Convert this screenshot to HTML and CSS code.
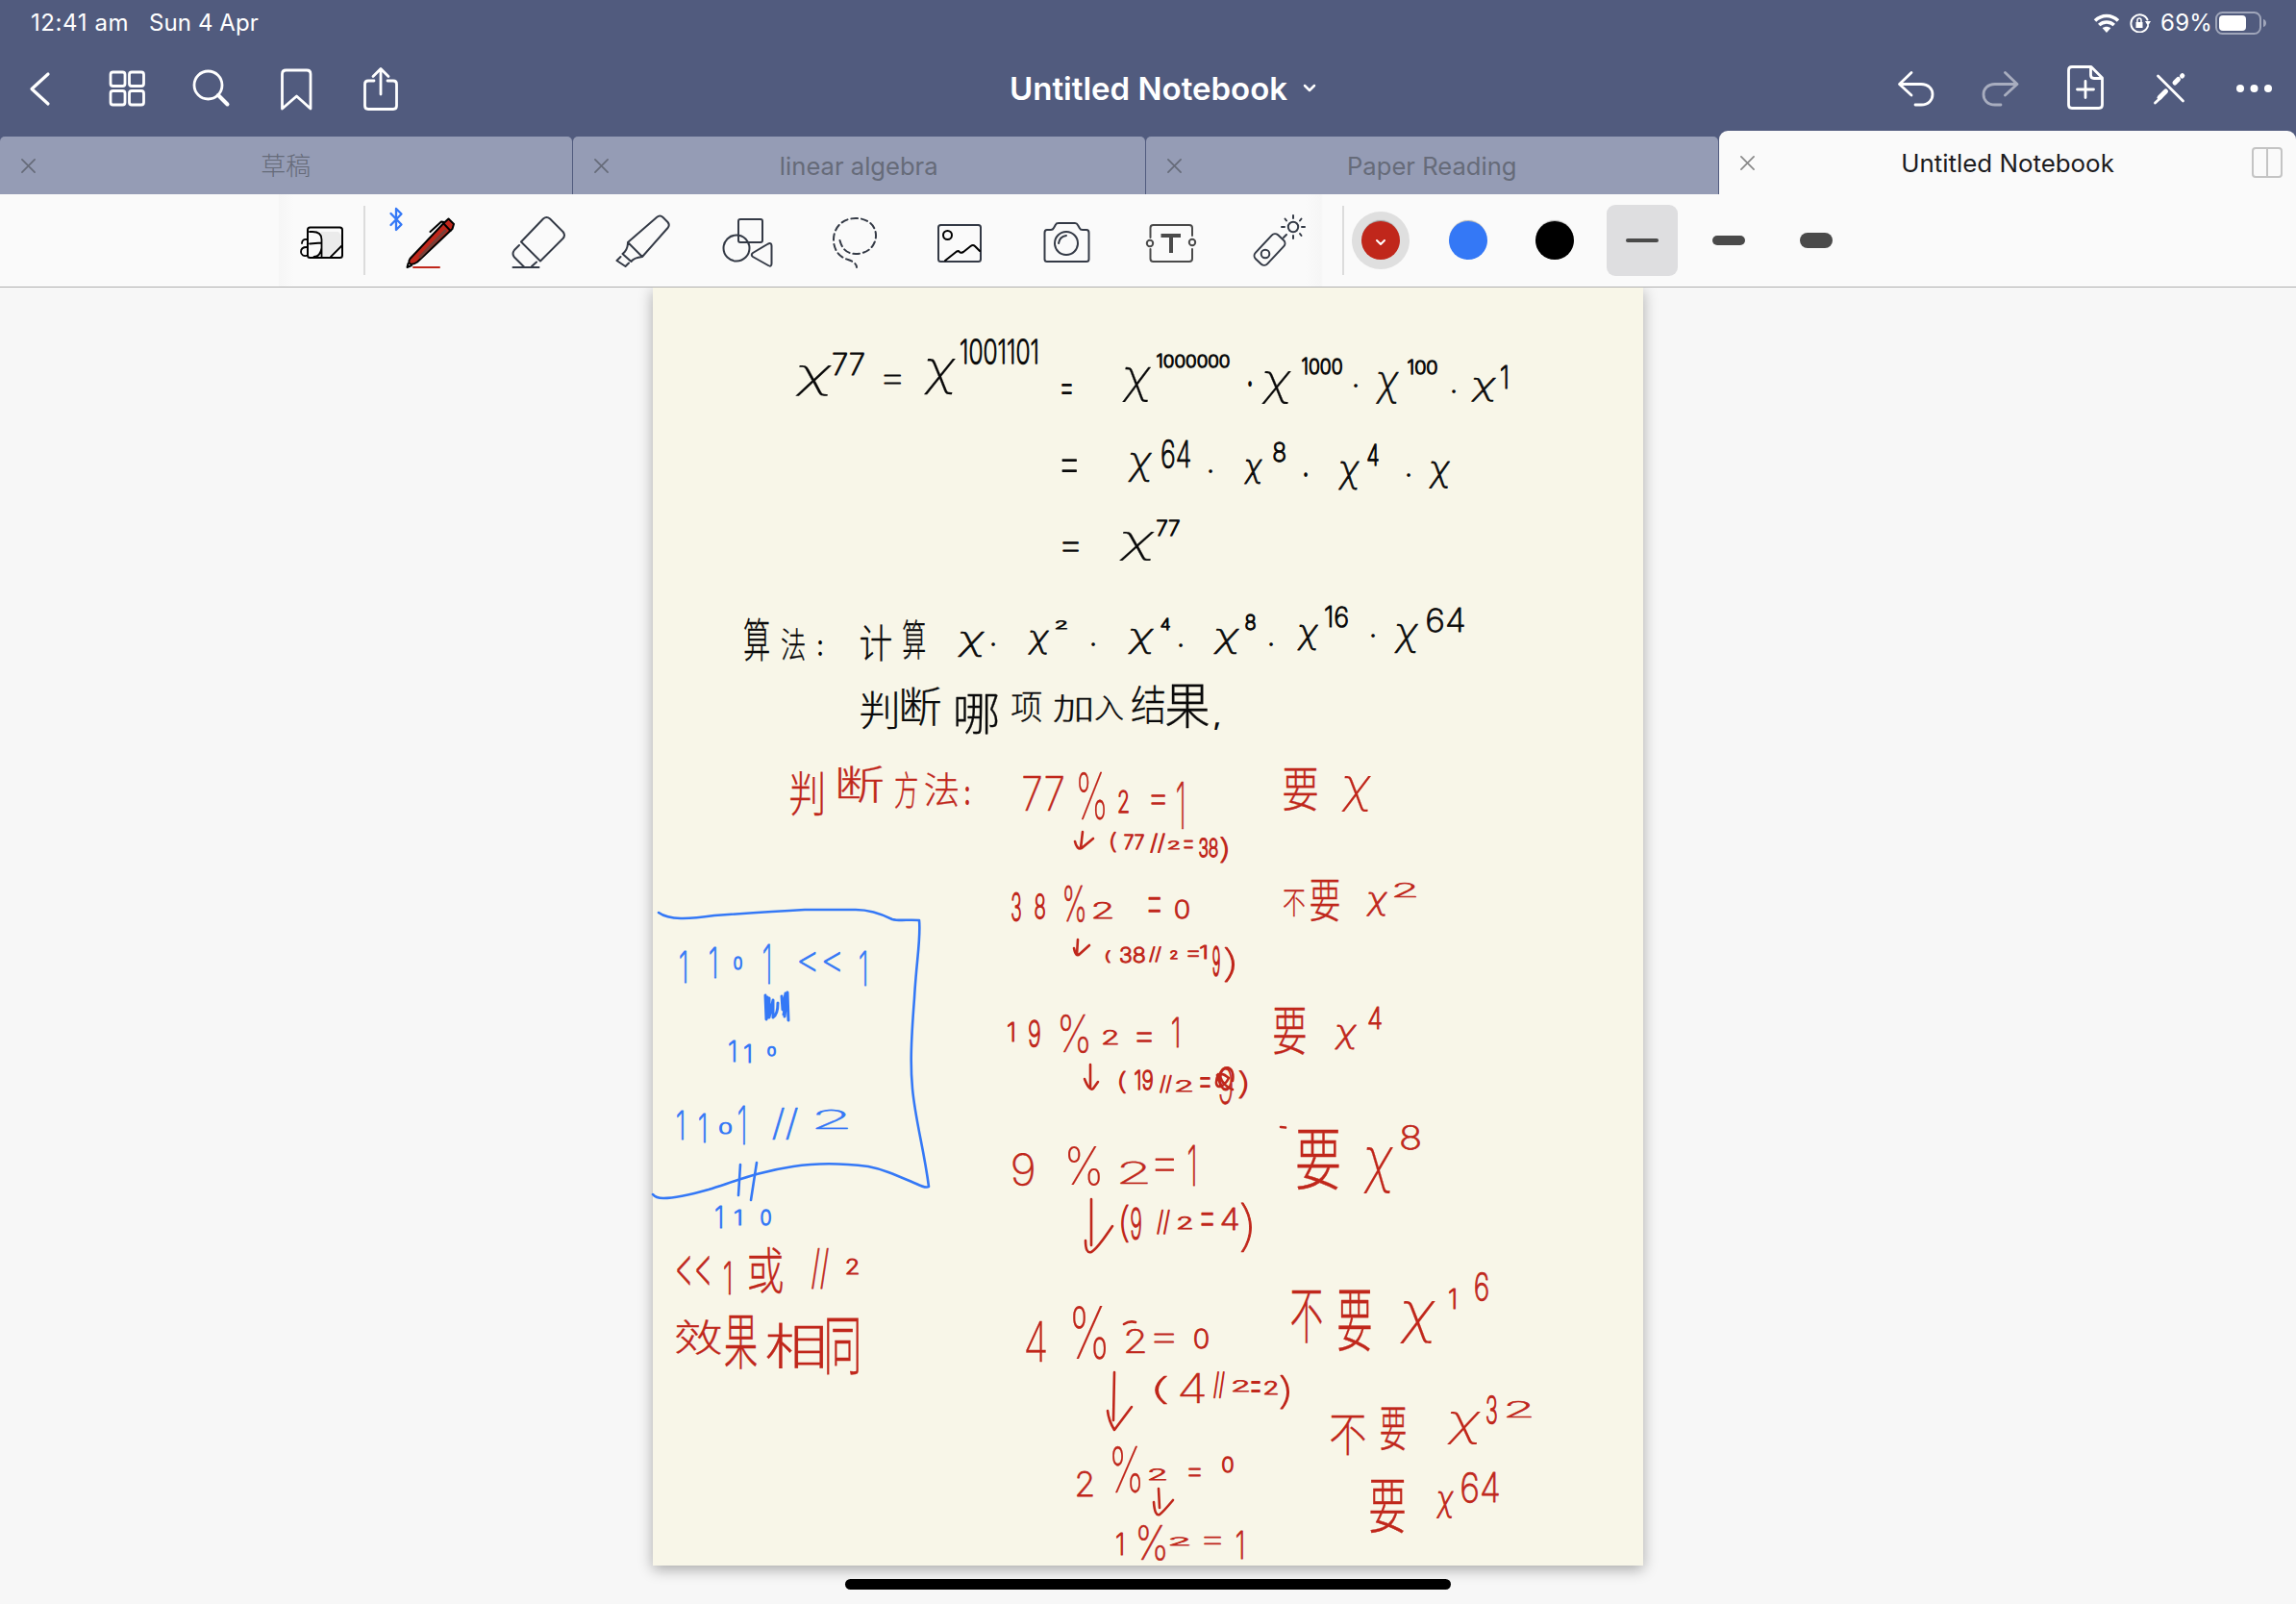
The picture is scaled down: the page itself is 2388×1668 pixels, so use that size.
FILE: index.html
```html
<!DOCTYPE html>
<html lang="en">
<head>
<meta charset="utf-8">
<title>Untitled Notebook</title>
<link rel="stylesheet" href="styles.css">
</head>
<body>
<header class="header">
  <div class="status">
    <span class="time">12:41 am</span><span class="date">Sun 4 Apr</span>
    <svg class="wifi" viewBox="0 0 28 20"><path class="w" d="M2 7.5C9 .8 19 .8 26 7.5M6.2 12c4.600-4 11-4 15.600 0"/><path fill="#fff" d="M14 20l-4.300-4.700c2.400-2 6.200-2 8.600 0z"/></svg>
    <svg class="lock" viewBox="0 0 22 20"><path class="l" d="M18.500 6.500A9 9 0 1 0 19 13"/><path fill="#fff" d="M16 8h6l-3 5zM6.500 9h7v6h-7z"/><path class="l thin" d="M8 9V7a2 2 0 0 1 4 0v2"/></svg>
    <span class="percent">69%</span>
    <svg class="battery" viewBox="0 0 54 24"><rect x="1" y="1" width="46" height="22" rx="6.500" fill="none" stroke="#a0a6ba" stroke-width="2"/><rect x="4" y="4" width="28" height="16" rx="4" fill="#fff"/><path fill="#a0a6ba" d="M50 8c4 1 4 7 0 8z"/></svg>
  </div>
  <nav class="nav">
    <svg class="nav-icon" viewBox="-2 48 88 88"><path stroke-width="3.200" d="M50 77L33 92.500L50 108"/></svg>
    <svg class="nav-icon" viewBox="86 48 88 88"><rect x="115" y="75" width="15" height="14.500" rx="2.500"/><rect x="134.500" y="75" width="15" height="14.500" rx="2.500"/><rect x="115" y="94.500" width="15" height="14.500" rx="2.500"/><rect x="134.500" y="94.500" width="15" height="14.500" rx="2.500"/></svg>
    <svg class="nav-icon" viewBox="174 48 88 88"><circle cx="216.500" cy="88.500" r="14.500"/><path stroke-width="4" d="M227 99L236.500 108.500"/></svg>
    <svg class="nav-icon" viewBox="262 48 88 88"><path d="M293.500 113V77q0-4 4-4h21.500q4 0 4 4V113L308.500 100z"/></svg>
    <svg class="nav-icon" viewBox="350 48 88 88"><path d="M389 84h-6q-3.500 0-3.500 3.500V110q0 3.500 3.500 3.500h26q3.500 0 3.500-3.500V87.500q0-3.500-3.500-3.500h-6M396 98V72M388 79.500L396 71.500L404 79.500"/></svg>
    <h1 class="title">Untitled Notebook<svg class="chev" viewBox="0 0 14 10"><path d="M2 2l5 5 5-5"/></svg></h1>
    <svg class="nav-icon right" viewBox="1948 48 88 88"><path d="M1988 75.500L1975.500 87.500L1988 99M1976 87.500H1998C2014 87.500 2014 109 1998 109H1992"/></svg>
    <svg class="nav-icon faded" viewBox="2036 48 88 88"><path d="M2085.500 75.500L2098 87.500L2085.500 99M2097 87.500H2075C2059 87.500 2059 109 2075 109H2081"/></svg>
    <svg class="nav-icon" viewBox="2124 48 88 88"><path d="M2155 69.500H2175L2186.500 81V109q0 3.500-3.500 3.500H2155q-3.500 0-3.500-3.500V73q0-3.500 3.500-3.500zM2174.500 70V78q0 3.500 3.500 3.500H2186M2169 84.500V101.500M2160.500 93H2177.500"/></svg>
    <svg class="nav-icon" viewBox="2212 48 88 88"><path stroke-width="5" d="M2246 101.500L2252.500 95M2262 86L2265.500 82.500M2269.500 79l.3-.3"/><path d="M2241.500 107L2248 101M2244.500 79L2270.500 105"/></svg>
    <svg class="nav-icon dots" viewBox="2300 48 88 88"><circle cx="2330" cy="92" r="4"/><circle cx="2344.500" cy="92" r="4"/><circle cx="2359" cy="92" r="4"/></svg>
  </nav>
  <div class="tabs">
    <div class="tab"><svg class="close" viewBox="0 0 16 16"><path d="M1 1l14 14M15 1L1 15"/></svg><span class="zh">草稿</span></div>
    <div class="tab"><svg class="close" viewBox="0 0 16 16"><path d="M1 1l14 14M15 1L1 15"/></svg><span>linear algebra</span></div>
    <div class="tab"><svg class="close" viewBox="0 0 16 16"><path d="M1 1l14 14M15 1L1 15"/></svg><span>Paper Reading</span></div>
    <div class="tab active"><svg class="close" viewBox="0 0 16 16"><path d="M1 1l14 14M15 1L1 15"/></svg><span>Untitled Notebook</span><svg class="split" viewBox="0 0 32 32"><rect x="1" y="1" width="30" height="30" rx="3"/><path d="M16 1v30"/></svg></div>
  </div>
</header>
<div class="toolbar">
  <div class="tools">
    <svg class="reader" viewBox="305 202 73 96"><path fill="#ebebeb" d="M334 241h18l3 4v9l-14 13h-7z"/><g stroke="#000"><rect x="320" y="236.500" width="36" height="31.500" rx="2.500"/><path stroke-width="1.800" d="M322 241h3c6 0 9.500 3 9.500 8v18.500M322 253.500l12-1M334.500 258c-1 6-4 9-8 9M314 253c0-3 2-4.500 5-4M319 257c-4 0-6 2-6 5 0 3 3 5 7 3.500M344 267l12-12"/></g></svg>
    <span class="sep"></span>
    <svg class="tool" viewBox="394 202 110 96"><path stroke="#3478f6" stroke-width="2.300" d="M406.500 222L417.500 233.500L412 239V217L417.500 222.500L406.500 234"/><path stroke="#000" fill="#c0271b" d="M426.500 269L460.500 233L466.500 227.500L472 233L470.500 238L434 272.500Q429 276 426 274Q424.500 272 426.500 269z"/><path stroke="#774139" stroke-width="3" d="M463 240L437 267"/><path stroke="#000" d="M461 232L468.500 240M447.500 241L459 230.500L462 231M424.500 274L423.500 278L428 276"/><path stroke="#c0271b" d="M430 278h27"/></svg>
    <svg class="tool" viewBox="504 202 110 96"><path d="M542 251.500L565 227.500Q568.500 224.500 572 227.500L585.500 241Q588.500 244.500 585.500 248L562 271.500zM540 255L535 260Q532 264 535 267.500L545 277.500M553 277L558 272.500M533.500 278H560.500"/></svg>
    <svg class="tool" viewBox="614 202 110 96"><path d="M653 252L683 226Q686.500 223 689.500 226L694.500 231Q697 234 694.500 237L668 267zM653 252Q653 260 647.500 264L656.500 272Q659 268 668 267M645.500 267L641.500 271L650.500 277L654 273.500"/></svg>
    <svg class="tool" viewBox="724 202 110 96"><rect x="768" y="228" width="25" height="24" rx="2"/><circle cx="766" cy="258" r="13.500"/><path d="M783 263L799 253.500Q802.500 252 802.500 256V274Q802.500 278 799 276L783 267Q780.500 265 783 263z"/></svg>
    <svg class="tool" viewBox="834 202 110 96"><path stroke-dasharray="6.500 4" d="M873.500 250C876 260 882 264 890 264C903 264 911 255 911 245C911 234 902 227 890 227C876 227 867 237 867 249C867 262 875 268 882 270C888 272 891 275 891 278"/></svg>
    <svg class="tool" viewBox="944 202 110 96"><rect x="976" y="234" width="44" height="38" rx="2.500"/><g stroke="#000"><circle cx="985.500" cy="244.500" r="4.500"/><path d="M983 271L995 261.500Q997 260.500 998 262T1002 262L1009.500 256Q1012 254 1014 256L1019 261"/></g></svg>
    <svg class="tool" viewBox="1054 202 110 96"><path d="M1089 239H1093Q1095 239 1096 237L1098 233.500Q1098.500 232 1101 232H1118Q1120 232 1121 234L1123 237.500Q1123.500 239 1126 239H1130Q1132.500 239 1132.500 242V269.500Q1132.500 272 1130 272H1089Q1086.500 272 1086.500 269.500V242Q1086.500 239 1089 239z"/><circle cx="1109" cy="253" r="12"/><path d="M1101 253Q1102 246 1109 245"/></svg>
    <svg class="tool" viewBox="1164 202 110 96"><g stroke="#4a4a4a"><path d="M1196.500 247V237Q1196.500 234 1199.500 234H1237Q1240 234 1240 237V245M1196.500 259V269Q1196.500 272 1199.500 272H1237Q1240 272 1240 269V259"/><circle cx="1196" cy="253" r="3.200"/><circle cx="1240" cy="252" r="3.200"/><path stroke-linecap="butt" stroke-width="4" d="M1207.500 245H1228M1218 245V263"/></g></svg>
    <svg class="tool" viewBox="1274 202 110 96"><rect x="1312" y="242.500" width="17" height="34" rx="4.500" transform="rotate(43 1320.500 259.500)"/><circle cx="1316" cy="264" r="4.300"/><circle cx="1345" cy="236" r="5.200"/><path d="M1345 224v3M1345 245v3M1333 236h3M1354 236h3M1336.500 227.500l1.500 2M1353.500 227.500l-1.500 2M1353.500 245l-1.500-2M1335 247l3-3"/></svg>
  </div>
  <span class="sep"></span>
  <div class="presets">
    <span class="slot"><span class="halo"><span class="swatch red"><svg class="pick" viewBox="0 0 12 9"><path d="M2 2l4 4 4-4"/></svg></span></span></span>
    <span class="slot"><span class="swatch blue"></span></span>
    <span class="slot"><span class="swatch black"></span></span>
    <span class="slot"><span class="chosen"><span class="bar fine"></span></span></span>
    <span class="slot"><span class="bar medium"></span></span>
    <span class="slot"><span class="bar bold"></span></span>
  </div>
</div>
<main class="desk">
  <svg class="page" id="page" viewBox="679 299 1030 1329">
    <g class="pen-red">
      <path d="M1126 865L1124 882M1118 875Q1120 884 1125 882L1137 872"/>
      <path d="M1121 977L1120 993M1117 986Q1119 996 1123 992L1133 983"/>
      <path d="M1134 1107L1134 1131M1128 1122Q1133 1135 1137 1132L1142 1125"/>
      <path d="M1135 1247L1135 1295M1129 1290Q1129 1304 1135 1302Q1141 1299 1157 1275"/>
      <path d="M1159 1427L1158 1477M1152 1467Q1153 1477 1159 1487L1177 1463"/>
      <path d="M1205 1548L1206 1568M1200 1562Q1201 1577 1206 1575Q1210 1572 1220 1560"/>
      <path d="M1332 1172L1337 1172.500M1169 1377Q1175 1373 1181 1375"/>
      <path d="M1267 1117C1260 1135 1273 1132 1278 1121C1264 1109 1268 1128 1282 1133M1266 1118L1270 1130M1268 1120C1271 1105 1285 1108 1282 1124"/>
    </g>
    <g class="pen-blue">
      <path d="M685 949C696 957 716 956 743 952Q800 948 837 946L890 946C906 946 920 952 928 956C935 958 945 956 956 957C958 975 953 1000 951 1038C947 1090 947 1110 949 1132C952 1165 961 1195 966 1234Q963 1236 953 1231C932 1222 919 1216 903 1213C880 1210 850 1209 825 1213C790 1218 763 1229 737 1237Q705 1246 690 1246Q682 1246 679 1242"/>
      <path d="M770 1211L768 1243M787 1209L781 1248"/>
      <path d="M796 1035L797 1060L800 1038L800 1058L804 1040L804 1058Q809 1055 809 1043M813 1036L814 1050L817 1033L816 1057L819 1032L820 1061M798 1037L799 1058L802 1045M815 1055L819 1036" stroke-width="3"/>
    </g>
  </svg>
</main>
<div class="home"></div>
<script src="notes.js"></script>
</body>
</html>
```

FILE: styles.css
```css
* { box-sizing: border-box; }
body { margin: 0; width: 2388px; height: 1668px; overflow: hidden; position: relative; background: #f7f7f7; font-family: Inter, "Noto Sans CJK SC", sans-serif; }
svg { display: block; fill: none; stroke-linecap: round; stroke-linejoin: round; flex: none; }
.header { height: 202px; background: #515b7e; }
.status { height: 48px; padding: 0 30px 0 32px; display: flex; align-items: center; color: #fff; font-size: 24px; line-height: 48px; }
.time { width: 123px; letter-spacing: .6px; }
.date { letter-spacing: .1px; }
.wifi { width: 28px; height: 20px; margin-left: auto; }
.wifi .w { stroke: #fff; stroke-width: 3.600; stroke-linecap: butt; }
.lock { width: 22px; height: 20px; margin: 0 10px 0 10px; }
.lock .l { stroke: #fff; stroke-width: 2; }
.lock .thin { stroke-width: 1.500; }
.percent { width: 57px; letter-spacing: .3px; }
.battery { width: 54px; height: 24px; }
.nav { height: 88px; display: flex; margin: 0 0 0 -2px; align-items: center; }
.nav-icon { width: 88px; height: 88px; stroke: #fff; stroke-width: 2.800; }
.faded { opacity: .5; }
.dots { fill: #fff; stroke: none; }
.title { flex: 1; margin: 0; padding-left: 612px; display: flex; align-items: center; color: #fff; font-size: 33px; font-weight: 600; line-height: 48px; white-space: nowrap; letter-spacing: 0; }
.chev { width: 14px; height: 10px; margin-left: 16px; stroke: #fff; stroke-width: 2.500; }
.tabs { height: 66px; display: flex; align-items: flex-end; }
.tab { width: 594.500px; height: 60px; margin-right: 1.500px; padding: 0 21px; display: flex; align-items: center; justify-content: center; background: #959cb5; color: #666b79; border-radius: 5px 5px 0 0; font-size: 25.600px; position: relative; }
.tab .close { position: absolute; left: 22px; width: 15px; height: 15px; stroke: #666b79; stroke-width: 1.800; }
.tab.active { width: auto; flex: 1; height: 66px; margin: 0; background: #fafafa; color: #1c1c1e; border-radius: 9px 9px 0 0; font-size: 25.900px; }
.tab.active .close { stroke: #888; }
.zh { font-size: 26px; font-weight: 300; padding-bottom: 3px; }
.split { position: absolute; right: 14px; width: 32px; height: 32px; stroke: #c4c4c4; stroke-width: 2; }
.toolbar { height: 97px; border-bottom: 1px solid #b0b0b0; background: #fafafa; padding-left: 290px; display: flex; align-items: center; }
.tools { display: flex; align-items: center; height: 96px; width: 1094px; padding-left: 15px; background: linear-gradient(90deg, #f6f6f6, #fafafa 16px, #fafafa 1068px, #f6f6f6 1084px, #fafafa 1086px); }
.reader { width: 73px; height: 96px; stroke-width: 2; }
.tool { width: 110px; height: 96px; stroke: #343a46; stroke-width: 2; }
.sep { width: 2px; height: 72px; background: #dcdcdc; margin: 0 14px 0 0; flex: none; }
.toolbar > .sep { margin: 0 -7px 0 12px; }
.presets { display: flex; }
.slot { width: 90.500px; height: 96px; display: flex; align-items: center; justify-content: center; }
.halo { width: 60px; height: 60px; border-radius: 50%; background: #dfdfdf; display: flex; align-items: center; justify-content: center; }
.swatch { width: 40px; height: 40px; border-radius: 50%; display: flex; align-items: center; justify-content: center; box-shadow: 0 -2px 1px -1px rgba(0,0,0,.3); }
.red { background: #c0271b; } .blue { background: #3478f6; } .black { background: #000; }
.pick { width: 12px; height: 9px; stroke: #fff; stroke-width: 2; margin-top: 4px; }
.chosen { width: 74px; height: 74px; border-radius: 9px; background: #dedee0; display: flex; align-items: center; justify-content: center; }
.bar { width: 34px; background: #4a4a4a; }
.fine { height: 4px; border-radius: 2px; }
.medium { height: 10px; border-radius: 5px; }
.bold { height: 16px; border-radius: 8px; }
.desk { height: 1329px; display: flex; justify-content: center; }
.page { width: 1030px; height: 1329px; overflow: visible; background: #f8f6e8; box-shadow: 0 4px 14px rgba(0,0,0,.32); clip-path: inset(0 -30px -30px -30px); }
.pen-red { stroke: #c0271b; stroke-width: 2.600; }
.pen-blue { stroke: #3478f6; stroke-width: 2.600; }
.home { position: absolute; left: 879px; top: 1642px; width: 630px; height: 11px; border-radius: 6px; background: #000; }
```

FILE: notes.js
```js
// Each note is "text left top right bottom", in page coordinates.
const notes = {
  '#0a0a0a': `χ 827 380 865 412|77 866 367 899 391|= 919 389 937 400|χ 961 373 994 411|1001101 999 352 1079 379|= 1104 399 1115 410
χ 1167 382 1197 418|1000000 1203 368 1279 383|. 1298 396 1302 402|χ 1312 386 1343 421|1000 1354 372 1396 390|. 1408 399 1412 403|χ 1431 387 1455 420|100 1464 374 1495 390|. 1510 405 1514 409|χ 1530 393 1556 418|1 1563 380 1568 405
= 1104 478 1120 492|χ 1173 471 1198 502|64 1208 457 1238 487|. 1257 488 1261 492|χ 1294 477 1313 503|8 1324 459 1337 481|. 1356 491 1360 496|χ 1392 479 1414 509|4 1422 462 1434 485|. 1463 492 1467 496|χ 1486 480 1508 508
= 1105 563 1122 574|χ 1164 553 1201 584|77 1203 541 1227 558
算 774 642 800 687|法 813 653 837 687|: 851 666 855 682|计 895 649 927 687|算 939 644 962 686|χ 996 657 1024 683|. 1031 668 1035 672|χ 1069 656 1091 681|2 1098 645 1110 655|. 1135 668 1139 672|χ 1173 654 1200 681|4 1207 643 1217 656|. 1226 669 1230 673|χ 1262 654 1289 681|8 1295 638 1306 656|. 1320 668 1324 672|χ 1349 650 1371 677|16 1378 630 1402 653|. 1426 659 1430 663|χ 1450 649 1475 680|64 1484 632 1523 658
判 895 719 933 758|断 938 715 978 755|哪 994 722 1038 763|项 1052 720 1083 751|加 1096 722 1135 751|入 1139 723 1168 749|结 1177 713 1211 753|果 1213 711 1257 757|, 1263 751 1268 759`,
  '#c0271b': `判 822 802 856 849|断 872 797 918 835|方 931 802 954 840|法 962 803 996 838|: 1004 818 1008 837|77 1064 807 1106 843|% 1122 802 1149 853|2 1163 822 1174 846|= 1197 826 1212 837|1 1226 813 1230 862|要 1335 799 1370 843|χ 1395 807 1426 844
( 1155 865 1161 887|77 1169 868 1190 884|// 1196 866 1212 887|2 1215 874 1227 884|= 1231 874 1241 883|38 1247 871 1267 892|) 1269 870 1277 898
3 1052 928 1062 958|8 1076 929 1087 956|% 1107 920 1128 959|2 1137 938 1157 956|= 1194 933 1207 949|0 1222 935 1237 956|不 1335 926 1357 953|要 1363 915 1393 958|χ 1421 928 1443 953|2 1450 918 1473 934
( 1150 988 1155 1002|38 1165 984 1191 1002|// 1195 984 1208 1001|2 1217 988 1225 998|= 1235 988 1247 995|1 1250 983 1255 998|9 1261 983 1269 1015|) 1273 985 1284 1022
1 1050 1063 1055 1084|9 1070 1060 1082 1089|% 1103 1055 1132 1095|2 1147 1071 1163 1087|= 1182 1073 1198 1084|1 1221 1057 1226 1089|要 1325 1048 1358 1097|χ 1388 1065 1411 1091|4 1423 1047 1437 1071
( 1164 1113 1171 1137|19 1180 1112 1199 1134|// 1206 1118 1219 1137|2 1223 1123 1240 1136|= 1248 1120 1259 1131|9 1268 1109 1282 1149|) 1288 1113 1297 1143
9 1053 1199 1075 1234|% 1111 1192 1144 1233|2 1165 1207 1194 1231|= 1201 1204 1221 1218|1 1238 1190 1244 1233|要 1349 1175 1393 1237|χ 1418 1193 1449 1242|8 1457 1170 1477 1196
( 1166 1253 1174 1293|9 1176 1255 1187 1289|// 1203 1258 1217 1284|2 1225 1265 1240 1279|= 1249 1261 1262 1275|4 1270 1255 1288 1279|) 1290 1250 1302 1302
4 1067 1374 1088 1416|% 1116 1357 1150 1414|2 1171 1381 1191 1407|= 1200 1387 1221 1397|0 1242 1381 1257 1403|不 1343 1342 1375 1396|要 1392 1341 1426 1405|χ 1456 1353 1493 1397|1 1509 1340 1514 1362|6 1534 1323 1548 1353
( 1201 1431 1214 1461|4 1227 1428 1253 1459|// 1262 1426 1274 1454|2 1282 1435 1299 1448|= 1301 1437 1311 1449|2 1315 1436 1329 1451|) 1331 1430 1341 1466|不 1384 1472 1420 1513|要 1436 1463 1462 1508|χ 1505 1468 1540 1503|3 1546 1451 1557 1481|2 1567 1456 1593 1474
2 1120 1529 1137 1556|% 1157 1503 1186 1553|2 1195 1527 1213 1540|= 1236 1527 1249 1536|0 1271 1514 1283 1532|要 1425 1538 1461 1594|χ 1494 1551 1512 1579|64 1520 1531 1559 1563
1 1163 1594 1168 1618|% 1184 1586 1212 1623|2 1217 1598 1237 1608|= 1252 1598 1270 1607|1 1288 1591 1294 1621
<< 704 1306 738 1337|1 755 1311 760 1346|或 779 1297 814 1345|// 844 1298 862 1341|2 880 1309 893 1326
效 703 1372 750 1409|果 754 1367 787 1423|相 797 1376 856 1423|同 860 1370 893 1430`,
  '#3478f6': `1 709 988 713 1022|1 740 984 744 1017|0 763 994 772 1009|1 796 981 800 1023|<< 831 990 874 1011|1 896 988 900 1025
1 760 1082 764 1105|1 776 1086 780 1106|0 798 1088 807 1099
1 706 1154 711 1185|1 729 1157 733 1188|0 748 1167 761 1180|1 770 1149 778 1190|// 803 1151 830 1185|2 848 1153 882 1174
1 746 1254 750 1278|1 766 1258 770 1275|0 791 1257 802 1275`
};
const NS = 'http://www.w3.org/2000/svg';
const page = document.getElementById('page');
const ctx = document.createElement('canvas').getContext('2d');

// Picks a light face; marks that get stretched wide use the thinnest one.
function faceFor(text) {
  if (text === 'χ') return 'italic 200 100px Inter';
  if (/[\u4e00-\u9fff]/.test(text)) return '300 100px "Noto Sans CJK SC"';
  if (/^[.,:]$/.test(text)) return '500 100px Inter';
  if (/^[()=]$/.test(text)) return '100 100px Inter';
  return '200 100px Inter';
}

// Stretch a piece of text so that its ink fills the given box.
function write(text, x0, y0, x1, y1, color) {
  const face = faceFor(text);
  if (text === '1' && x1 - x0 < 9) { x0 -= 2; x1 = x0 + 7; }
  ctx.font = face;
  const m = ctx.measureText(text);
  const w = m.actualBoundingBoxLeft + m.actualBoundingBoxRight;
  const h = m.actualBoundingBoxAscent + m.actualBoundingBoxDescent;
  const sx0 = (x1 - x0) / w;
  const sy0 = (y1 - y0) / h;
  const mean = Math.sqrt(sx0 * sy0);
  const stem = face.startsWith('100') ? 2.5 : 4.5;
  const cjk = /[\u4e00-\u9fff]/.test(text);
  const ink = /^[.,:]$/.test(text) ? 0 : cjk ? .3 : Math.max(.2, Math.min(1.4, 2.5 - stem * mean));
  const sx = (x1 - x0 - ink) / w;
  const sy = (y1 - y0 - ink) / h;
  const t = document.createElementNS(NS, 'text');
  t.textContent = text;
  t.style.font = face;
  t.setAttribute('fill', color);
  t.setAttribute('stroke', color);
  t.setAttribute('stroke-width', ink / Math.sqrt(sx * sy));
  t.setAttribute('transform', `translate(${x0 + ink / 2 + m.actualBoundingBoxLeft * sx} ${y0 + ink / 2 + m.actualBoundingBoxAscent * sy}) scale(${sx} ${sy})`);
  page.appendChild(t);
}
for (const [color, list] of Object.entries(notes)) {
  for (const item of list.split(/[|\n]/)) {
    const [text, ...box] = item.split(' ');
    write(text, ...box.map(Number), color);
  }
}
```
